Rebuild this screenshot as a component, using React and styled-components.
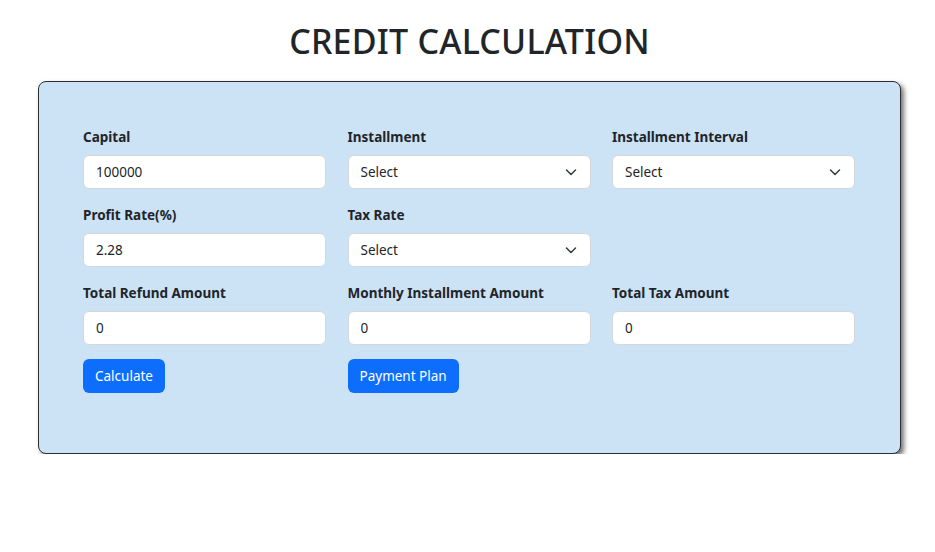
import React from "react";
import styled, { createGlobalStyle } from "styled-components";

const Global = createGlobalStyle`
  * { box-sizing: border-box; }
  body {
    margin: 0;
    background: #fff;
    color: #212529;
    font-family: "Noto Sans", "Open Sans", sans-serif;
    font-size: 14px;
    line-height: 1.5;
  }
`;

const Page = styled.div`
  padding: 21px 34px 0 38px;
`;

const Title = styled.h1`
  margin: 0 0 19px;
  height: 41px;
  text-align: center;
  font-size: 34px;
  font-weight: 500;
  line-height: 41px;
  color: #212529;
  letter-spacing: 0.2px;
`;

const Card = styled.div`
  background: #cce2f5;
  border: 1px solid #2b2f33;
  border-radius: 8px;
  box-shadow: 3px 3px 5px rgba(0, 0, 0, 0.55);
  padding: 45px 45px 60px 44px;
`;

const Grid = styled.div`
  display: grid;
  grid-template-columns: repeat(3, 243px);
  column-gap: 21.5px;
  row-gap: 16px;
`;

const Field = styled.div`
  display: flex;
  flex-direction: column;
  gap: 7px;
`;

const Label = styled.label`
  font-weight: 700;
  font-size: 13.5px;
  line-height: 21px;
  color: #212529;
`;

const Input = styled.input`
  height: 34px;
  width: 100%;
  padding: 0 12px;
  border: 1px solid #d4d8dd;
  border-radius: 6px;
  background: #fff;
  font: inherit;
  font-size: 13.5px;
  color: #212529;
  outline: none;
`;

const SelectBox = styled.div`
  height: 34px;
  display: flex;
  align-items: center;
  justify-content: space-between;
  padding: 0 13px 0 12px;
  border: 1px solid #d4d8dd;
  border-radius: 6px;
  background: #fff;
  font-size: 13.5px;
  color: #212529;
`;

const Button = styled.button`
  justify-self: start;
  height: 34px;
  padding: 0 12px;
  border: none;
  border-radius: 6px;
  background: #0d6efd;
  color: #fff;
  font: inherit;
  font-size: 13.5px;
  cursor: pointer;
  margin-top: -2px;
`;

const Chevron = () => (
  <svg width="12" height="8" viewBox="0 0 12 8" fill="none">
    <path d="M1.5 2l4.5 4.5 4.5-4.5" stroke="#343a40" strokeWidth="1.5" strokeLinecap="round" strokeLinejoin="round" />
  </svg>
);

const Select = () => (
  <SelectBox>
    <span>Select</span>
    <Chevron />
  </SelectBox>
);

export default function App() {
  return (
    <>
      <Global />
      <Page>
        <Title>CREDIT CALCULATION</Title>
        <Card>
          <Grid>
            <Field>
              <Label>Capital</Label>
              <Input defaultValue="100000" />
            </Field>
            <Field>
              <Label>Installment</Label>
              <Select />
            </Field>
            <Field>
              <Label>Installment Interval</Label>
              <Select />
            </Field>
            <Field>
              <Label>Profit Rate(%)</Label>
              <Input defaultValue="2.28" />
            </Field>
            <Field>
              <Label>Tax Rate</Label>
              <Select />
            </Field>
            <div />
            <Field>
              <Label>Total Refund Amount</Label>
              <Input defaultValue="0" />
            </Field>
            <Field>
              <Label>Monthly Installment Amount</Label>
              <Input defaultValue="0" />
            </Field>
            <Field>
              <Label>Total Tax Amount</Label>
              <Input defaultValue="0" />
            </Field>
            <Button>Calculate</Button>
            <Button>Payment Plan</Button>
          </Grid>
        </Card>
      </Page>
    </>
  );
}
